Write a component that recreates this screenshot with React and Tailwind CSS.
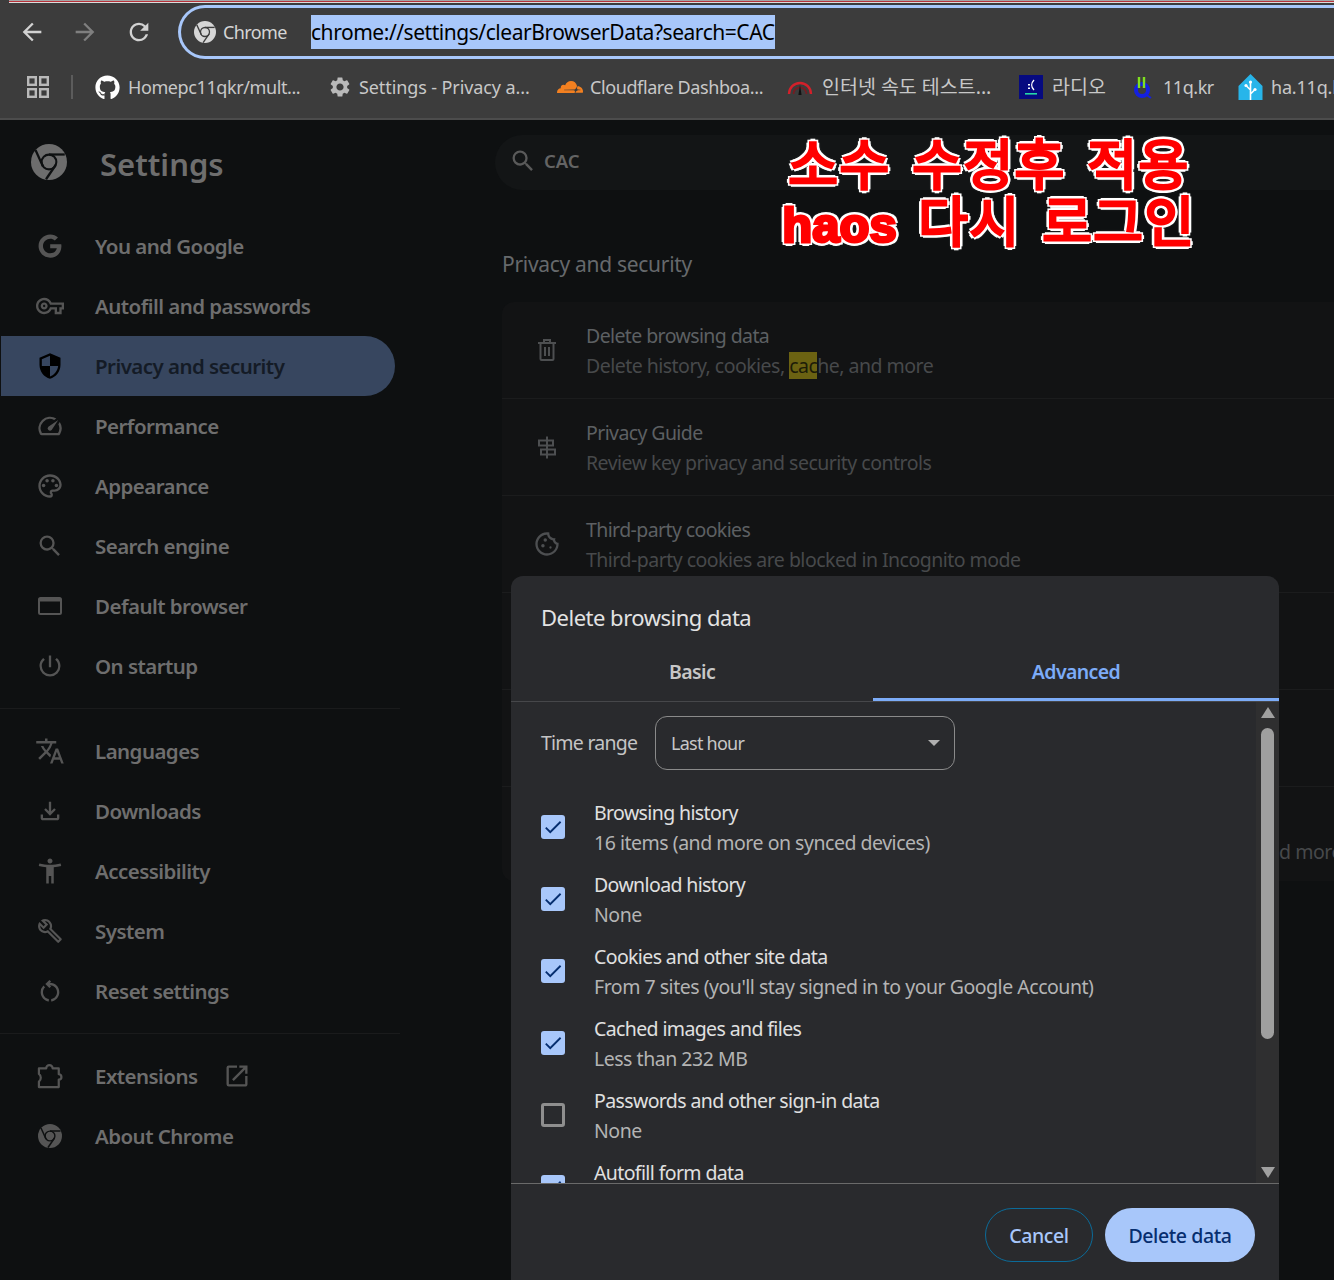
import React from 'react';
import { FaGithub, FaGoogle } from 'react-icons/fa';
import { SiCloudflare } from 'react-icons/si';
import {
  MdArrowBack,
  MdArrowForward,
  MdRefresh,
  MdSettings,
  MdOutlineVpnKey,
  MdSecurity,
  MdOutlineSpeed,
  MdOutlinePalette,
  MdSearch,
  MdOutlinePowerSettingsNew,
  MdTranslate,
  MdOutlineFileDownload,
  MdAccessibilityNew,
  MdOutlineBuild,
  MdOutlineRestartAlt,
  MdOpenInNew,
  MdOutlineCookie,
  MdCheck,
} from 'react-icons/md';

const ChromeIcon = ({ className, color, bg }) => (
  <svg viewBox="0 0 24 24" className={className}>
    <circle cx="12" cy="12" r="12" fill={color} />
    <circle cx="12" cy="12" r="5.6" fill={bg} />
    <circle cx="12" cy="12" r="4.2" fill={color} />
    <g stroke={bg} strokeWidth="1.5">
      <line x1="22.5" y1="7" x2="12" y2="7" />
      <line x1="3" y1="4" x2="8" y2="15" />
      <line x1="10" y1="23.5" x2="16.5" y2="14" />
    </g>
  </svg>
);

const BrowserIcon = () => (
  <svg viewBox="0 0 24 18" className="w-[24px] h-[18px]">
    <rect x="1" y="1" width="22" height="16" rx="1.5" fill="none" stroke="#555" strokeWidth="2" />
    <rect x="1" y="1" width="22" height="3.5" fill="#555" />
  </svg>
);

const ExtensionIcon = () => (
  <svg viewBox="0 0 24 24" className="w-[28px] h-[28px]" fill="none" stroke="#555" strokeWidth="1.9">
    <path d="M2.5 5.5h6.2a2.8 2.8 0 0 1 5.6 0h5.2v5a2.3 2.3 0 0 1 0 4.6v6.4H2.5v-4.7a4.2 4.2 0 0 0 0-6.6z" strokeLinejoin="round" />
  </svg>
);

const TrashIcon = () => (
  <svg viewBox="0 0 18 22" className="w-[18px] h-[22px]" fill="none" stroke="#4d4f51" strokeWidth="2">
    <path d="M0 4h18M6 4V1h6v3M2.5 4v16a1 1 0 0 0 1 1h11a1 1 0 0 0 1-1V4M7 8v9M11 8v9" />
  </svg>
);

const SignpostIcon = () => (
  <svg viewBox="0 0 20 24" className="w-[20px] h-[25px]" fill="none" stroke="#4d4f51" strokeWidth="2">
    <path d="M10 1v22M2 5h14v5H2zM18 14H4v5h14z" />
  </svg>
);

const AppsIcon = () => (
  <svg viewBox="0 0 22 22" className="w-[22px] h-[22px]" fill="none" stroke="#b9b9b9" strokeWidth="2.4">
    <rect x="1.2" y="1.2" width="7.6" height="7.6" />
    <rect x="13.2" y="1.2" width="7.6" height="7.6" />
    <rect x="1.2" y="13.2" width="7.6" height="7.6" />
    <rect x="13.2" y="13.2" width="7.6" height="7.6" />
  </svg>
);

const GaugeIcon = () => (
  <svg viewBox="0 0 26 16" className="w-[26px] h-[16px]" fill="none">
    <path d="M2 15a11 11 0 0 1 22 0" stroke="#d3202a" strokeWidth="2.4" />
    <path d="M6.5 15a6.5 6.5 0 0 1 13 0" stroke="#7a1a20" strokeWidth="1.6" />
    <path d="M13 6l1.6 10h-3.2z" fill="#111" />
  </svg>
);

const RadioIcon = () => (
  <svg viewBox="0 0 24 24" className="w-[24px] h-[24px]">
    <rect width="24" height="24" fill="#060a80" />
    <path d="M15 5c-3 3-3 7 0 10" fill="none" stroke="#fff" strokeWidth="1.4" />
    <path d="M9 9h2v1.5H9zM9 12.5h2V14H9z" fill="#fff" />
    <rect x="6" y="18" width="12" height="1.6" fill="#25d8a8" />
  </svg>
);

const QIcon = () => (
  <svg viewBox="0 0 20 24" className="w-[20px] h-[24px]">
    <circle cx="9" cy="15" r="6" fill="none" stroke="#1420e0" strokeWidth="4" />
    <path d="M12 19l6 4" stroke="#1420e0" strokeWidth="2" />
    <path d="M6 2v11M11 2v11" stroke="#7fe020" strokeWidth="2.4" />
  </svg>
);

const HomeAssistantIcon = () => (
  <svg viewBox="0 0 24 26" className="w-[25px] h-[26px]">
    <path d="M12 0l12 12v14H0V12z" fill="#27b5ea" />
    <path d="M12 8v18M12 16l-4-4M12 20l4-4" stroke="#fff" strokeWidth="1.6" fill="none" />
    <circle cx="7.5" cy="11.5" r="1.6" fill="#fff" />
    <circle cx="16.5" cy="15.5" r="1.6" fill="#fff" />
    <circle cx="12" cy="8" r="1.6" fill="#fff" />
  </svg>
);

const bookmarks = [
  { label: 'Homepc11qkr/mult...', icon: <FaGithub className="text-[25px] text-white" />, cls: 'w-[233px] gap-[8px]', text: 'text-[18px] tracking-[-0.4px]' },
  { label: 'Settings - Privacy a...', icon: <MdSettings className="text-[24px] text-[#b9b9b9]" />, cls: 'w-[229px] gap-[7px]', text: 'text-[18px] tracking-[-0.1px]' },
  { label: 'Cloudflare Dashboa...', icon: <SiCloudflare className="text-[26px] text-[#f38020]" />, cls: 'w-[230px] gap-[7px]', text: 'text-[18px] tracking-[-0.4px]' },
  { label: '인터넷 속도 테스트...', icon: <GaugeIcon />, cls: 'w-[232px] gap-[9px]', text: 'text-[19.5px]' },
  { label: '라디오', icon: <RadioIcon />, cls: 'w-[114px] gap-[9px]', text: 'text-[19.5px]' },
  { label: '11q.kr', icon: <QIcon />, cls: 'w-[105px] gap-[10px]', text: 'text-[18px] tracking-[-0.45px]' },
  { label: 'ha.11q.kr', icon: <HomeAssistantIcon />, cls: 'w-[140px] gap-[8px]', text: 'text-[18px] tracking-[-0.2px]' },
];

const navGroupOne = [
  { label: 'You and Google', icon: <FaGoogle className="text-[24px]" /> },
  { label: 'Autofill and passwords', icon: <MdOutlineVpnKey className="text-[28px]" /> },
  { label: 'Privacy and security', icon: <MdSecurity className="text-[28px] text-black" />, active: true },
  { label: 'Performance', icon: <MdOutlineSpeed className="text-[28px]" /> },
  { label: 'Appearance', icon: <MdOutlinePalette className="text-[28px]" /> },
  { label: 'Search engine', icon: <MdSearch className="text-[28px]" /> },
  { label: 'Default browser', icon: <BrowserIcon /> },
  { label: 'On startup', icon: <MdOutlinePowerSettingsNew className="text-[28px]" /> },
];

const navGroupTwo = [
  { label: 'Languages', icon: <MdTranslate className="text-[30px]" /> },
  { label: 'Downloads', icon: <MdOutlineFileDownload className="text-[28px]" /> },
  { label: 'Accessibility', icon: <MdAccessibilityNew className="text-[30px]" /> },
  { label: 'System', icon: <MdOutlineBuild className="text-[26px]" /> },
  { label: 'Reset settings', icon: <MdOutlineRestartAlt className="text-[28px]" /> },
];

const NavItem = ({ label, icon, active, children }) => (
  <div
    className={`flex items-center h-[60px] ml-[1px] w-[394px] rounded-r-full ${
      active ? 'bg-[#37465f] text-[#141b26]' : 'text-[#6e6e6e]'
    }`}
  >
    <span className={`w-[30px] ml-[34px] mr-[30px] flex justify-center ${active ? '' : 'text-[#555]'}`}>{icon}</span>
    <span className="text-[20.5px] font-semibold tracking-[-0.55px]">{label}</span>
    {children}
  </div>
);

const settingsRows = [
  { title: 'Delete browsing data', icon: <TrashIcon />, highlight: true },
  { title: 'Privacy Guide', sub: 'Review key privacy and security controls', icon: <SignpostIcon /> },
  { title: 'Third-party cookies', sub: 'Third-party cookies are blocked in Incognito mode', icon: <MdOutlineCookie className="text-[28px] text-[#4d4f51]" /> },
];

const dataRows = [
  { title: 'Browsing history', sub: '16 items (and more on synced devices)', checked: true },
  { title: 'Download history', sub: 'None', checked: true },
  { title: 'Cookies and other site data', sub: "From 7 sites (you'll stay signed in to your Google Account)", checked: true },
  { title: 'Cached images and files', sub: 'Less than 232 MB', checked: true },
  { title: 'Passwords and other sign-in data', sub: 'None', checked: false },
  { title: 'Autofill form data', checked: true },
];

const Checkbox = ({ checked }) =>
  checked ? (
    <span className="w-[24px] h-[24px] mb-[2px] rounded-[3px] bg-[#a8c7fa] flex items-center justify-center self-center shrink-0">
      <MdCheck className="text-[22px] text-[#062e6f]" />
    </span>
  ) : (
    <span className="w-[24px] h-[24px] mb-[2px] rounded-[3px] border-[3px] border-[#8e8e8e] self-center shrink-0" />
  );

export default function App() {
  return (
    <div className="relative w-[1334px] h-[1280px] overflow-hidden bg-[#0e1011] [font-family:'Noto_Sans','Noto_Sans_CJK_KR',sans-serif]">
      {/* Browser toolbar */}
      <header className="h-[120px] bg-[#3c3c3c] border-b-2 border-[#4c4c4c] overflow-hidden">
        <div className="ml-[9px]">
          <div className="h-[1px] bg-[#a5a5a5]" />
          <div className="h-[1px] bg-[#b8323a]" />
          <div className="h-[1px] bg-[#dcdcdc]" />
        </div>
        <div className="flex items-center h-[56px] mt-[1px]">
          <div className="flex items-center w-[177px] shrink-0 text-[28px]">
            <MdArrowBack className="ml-[18px] text-[#d2d2d2]" />
            <MdArrowForward className="ml-[25px] text-[#7f7f7f]" />
            <MdRefresh className="ml-[26px] text-[#d2d2d2]" />
          </div>
          <div className="flex items-center h-[54px] w-[1300px] shrink-0 ml-[1px] border-[3px] border-r-0 border-[#a8c7fa] rounded-l-full">
            <ChromeIcon className="w-[22px] h-[22px] ml-[13px]" color="#d6d6d6" bg="#3c3c3c" />
            <span className="ml-[7px] w-[88px] text-[18px] text-[#d5d5d5] tracking-[-0.6px]">Chrome</span>
            <span className="block h-[34px] pt-[1px] bg-[#a8c7fa] text-black text-[21px] leading-[33px] tracking-[-0.46px] whitespace-nowrap">
              chrome://settings/clearBrowserData?search=CAC
            </span>
          </div>
        </div>
        <div className="flex items-center h-[54px]">
          <span className="ml-[27px] shrink-0"><AppsIcon /></span>
          <span className="ml-[22px] mr-[22px] w-[2px] h-[24px] shrink-0 bg-[#5c5c5c]" />
          {bookmarks.map((b) => (
            <div key={b.label} className={`flex items-center shrink-0 ${b.cls}`}>
              <span className="flex justify-center shrink-0">{b.icon}</span>
              <span className={`text-[#c8c8c8] whitespace-nowrap ${b.text}`}>{b.label}</span>
            </div>
          ))}
        </div>
      </header>

      <div className="flex">
        {/* Settings sidebar */}
        <nav className="w-[400px] shrink-0">
          <div className="h-[96px] flex items-start pt-[24px] pl-[31px]">
            <ChromeIcon className="w-[36px] h-[36px]" color="#6d6d6d" bg="#0e1011" />
            <h1 className="ml-[33px] text-[31px] leading-[40px] font-semibold text-[#6e6e6e]">Settings</h1>
          </div>
          {navGroupOne.map((item) => (
            <NavItem key={item.label} {...item} />
          ))}
          <div className="mt-[12px] mb-[12px] h-[1px] bg-[#1a1b1c]" />
          {navGroupTwo.map((item) => (
            <NavItem key={item.label} {...item} />
          ))}
          <div className="mt-[12px] mb-[12px] h-[1px] bg-[#1a1b1c]" />
          <NavItem label="Extensions" icon={<ExtensionIcon />}>
            <MdOpenInNew className="ml-[25px] text-[28px] text-[#555]" />
          </NavItem>
          <NavItem label="About Chrome" icon={<ChromeIcon className="w-[24px] h-[24px]" color="#555" bg="#0e1011" />} />
        </nav>

        {/* Settings page behind the dialog */}
        <main className="shrink-0 w-[934px]">
          <div className="ml-[95px] mt-[15px] w-[900px] h-[55px] pb-[3px] rounded-full bg-[#131516] flex items-center pl-[14px]">
            <MdSearch className="text-[28px] text-[#5a5a5a]" />
            <span className="ml-[7px] text-[18.5px] font-semibold text-[#646464]">CAC</span>
          </div>
          <div className="ml-[102px]">
            <h2 className="mt-[59px] text-[21px] leading-[30px] text-[#66696c] tracking-[-0.3px]">Privacy and security</h2>
            <div className="mt-[23px] w-[900px] rounded-[12px] bg-[#121314]">
              {settingsRows.map((row) => (
                <div key={row.title} className="flex items-center h-[97px] border-b border-[#1b1c1d]">
                  <span className="w-[30px] ml-[30px] flex justify-center">{row.icon}</span>
                  <div className="ml-[24px] pt-[2px] text-[19.5px] leading-[30px] tracking-[-0.52px] whitespace-nowrap">
                    <p className="text-[#5d6063] tracking-[-0.6px]">{row.title}</p>
                    {row.highlight ? (
                      <p className="text-[#47494b]">
                        Delete history, cookies, <span className="bg-[#6b6212] text-[#1d1c08]">cac</span>he, and more
                      </p>
                    ) : (
                      <p className="text-[#47494b]">{row.sub}</p>
                    )}
                  </div>
                </div>
              ))}
              <div className="h-[97px] border-b border-[#1b1c1d]" />
              <div className="h-[97px] border-b border-[#1b1c1d]" />
              <div className="h-[94px] pt-[50px] pl-[777px] text-[19.5px] leading-[30px] text-[#47494b] tracking-[-0.46px]">d more</div>
            </div>
          </div>
        </main>
      </div>

      {/* Annotation written on top of the screenshot */}
      <div className="absolute left-[781px] top-[134px] w-[416px] text-center text-[#ff0000] whitespace-nowrap [-webkit-text-stroke:3px_#ff0000] [text-shadow:4px_0_0_#fff,-4px_0_0_#fff,0_4px_0_#fff,0_-4px_0_#fff,3px_3px_0_#fff,-3px_3px_0_#fff,3px_-3px_0_#fff,-3px_-3px_0_#fff,0_0_5px_#fff]">
        <p className="text-[54px] leading-[60px] tracking-[1.5px] [word-spacing:6px]">소수 수정후 적용</p>
        <p className="text-[54px] leading-[55px] tracking-[1.5px] [word-spacing:6px]">
          <span className="text-[49px] font-bold tracking-[0px] [font-family:'Liberation_Sans',sans-serif]">haos</span> 다시 로그인
        </p>
      </div>

      {/* Delete browsing data dialog */}
      <section className="absolute left-[511px] top-[576px] w-[768px] h-[704px] rounded-t-[12px] bg-[#292a2d] flex flex-col">
        <h3 className="pl-[30px] pt-[25px] h-[74px] text-[22px] leading-[32px] text-[#e3e3e3] tracking-[-0.5px]">Delete browsing data</h3>
        <div className="flex h-[52px] border-b border-[#46474a] text-[19.5px] font-semibold tracking-[-0.6px]">
          <div className="w-[362px] flex justify-center pt-[7px] text-[#c7c7c7]">Basic</div>
          <div className="w-[406px] h-[51px] flex justify-center pt-[7px] text-[#7cacf8] border-b-[3px] border-[#7cacf8]">Advanced</div>
        </div>
        <div className="flex h-[481px] overflow-hidden">
          <div className="flex-1 pl-[30px] pt-[14px] overflow-hidden">
            <div className="flex items-center mb-[22px]">
              <span className="w-[114px] text-[19.5px] text-[#c4c4c4] tracking-[-0.75px]">Time range</span>
              <div className="w-[300px] h-[54px] rounded-[12px] border border-[#8a8a8a] flex items-center justify-between pl-[15px] pr-[14px] text-[18px] text-[#c7c7c7] tracking-[-0.75px]">
                Last hour
                <span className="w-0 h-0 border-x-[6px] border-x-transparent border-t-[6px] border-t-[#b0b0b0]" />
              </div>
            </div>
            {dataRows.map((row) => (
              <div key={row.title} className="flex h-[72px] shrink-0 py-[6px]">
                <Checkbox checked={row.checked} />
                <div className="ml-[29px] text-[19.5px] leading-[30px] tracking-[-0.48px] whitespace-nowrap">
                  <p className="text-[#e0e0e0] tracking-[-0.62px]">{row.title}</p>
                  {row.sub && <p className="text-[#b4b4b4]">{row.sub}</p>}
                </div>
              </div>
            ))}
          </div>
          <div className="w-[23px] shrink-0 bg-[#2f2f30] flex flex-col items-center pt-[5px]">
            <span className="w-0 h-0 border-x-[7.5px] border-x-transparent border-b-[11px] border-b-[#a0a0a0]" />
            <span className="mt-[10px] w-[13px] h-[311px] rounded-full bg-[#9f9f9f]" />
            <span className="mt-[128px] w-0 h-0 border-x-[7.5px] border-x-transparent border-t-[11px] border-t-[#a0a0a0]" />
          </div>
        </div>
        <footer className="flex-1 border-t border-[#6a6a6a] flex justify-end items-start gap-[12px] pt-[24px] pr-[24px] text-[19.5px] font-medium tracking-[-0.4px]">
          <button className="w-[108px] h-[54px] pt-[1px] rounded-full border border-[#0b6b99] text-[#a8c7fa]">Cancel</button>
          <button className="w-[150px] h-[54px] pt-[1px] rounded-full bg-[#a8c7fa] text-[#062e6f]">Delete data</button>
        </footer>
      </section>
    </div>
  );
}
